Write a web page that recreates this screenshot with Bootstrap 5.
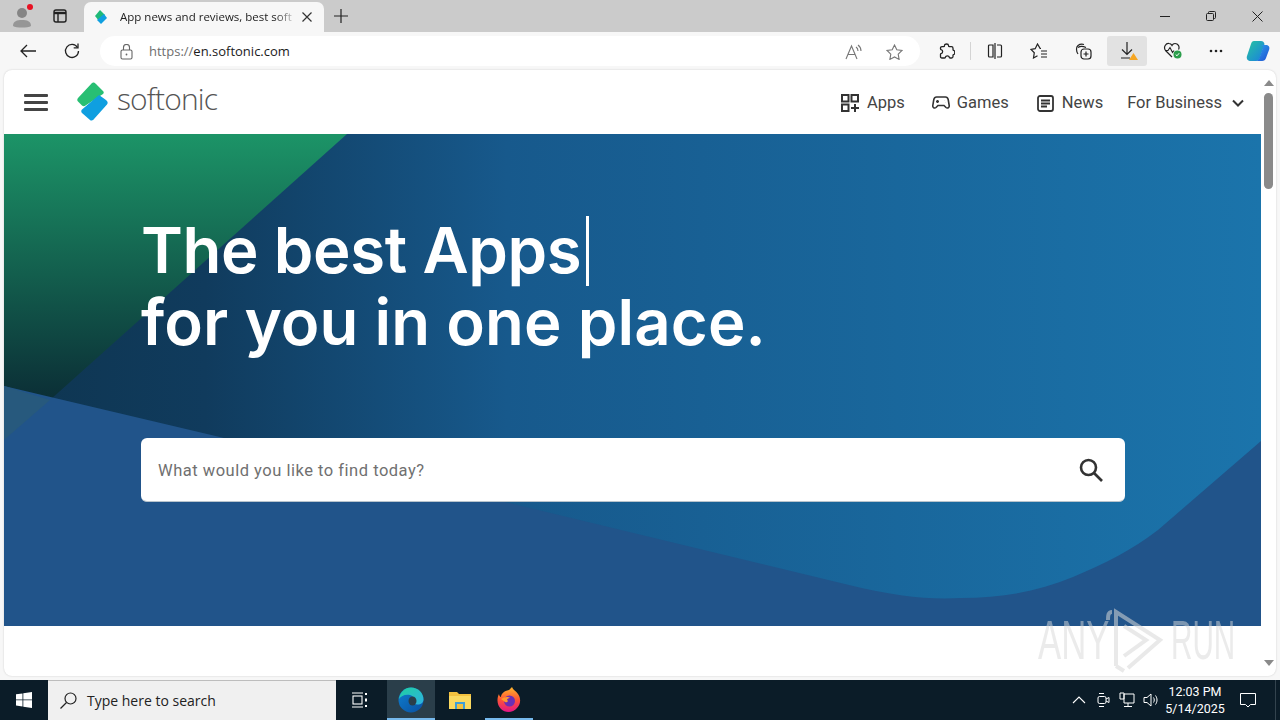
<!DOCTYPE html>
<html lang="en">
<head>
    <meta charset="UTF-8">
    <meta name="viewport" content="width=device-width, initial-scale=1.0">
    <title>Softonic</title>
    <link href="https://cdn.jsdelivr.net/npm/bootstrap@5.3.0/dist/css/bootstrap.min.css" rel="stylesheet">
    <style>
        body { width: 1280px; height: 720px; overflow: hidden; background: #f7f7f7; font-family: "Open Sans", "Liberation Sans", sans-serif; }
        svg { display: block; }

        /* browser chrome */
        .tab-strip { height: 32px; background: #cbcbcb; }
        .strip-btn { width: 38px; height: 32px; }
        .profile-btn { width: 36px; margin-left: 4px; }
        .tabs-btn { margin-left: 1px; }
        .browser-tab { width: 240px; height: 30px; margin-top: 2px; margin-left: 5px; padding: 0 11px 0 10px; background: #f7f7f7; border-radius: 7px 7px 0 0; font-size: 11.5px; color: #222; }
        .tab-title { width: 172px; margin-left: 12px; white-space: nowrap; overflow: hidden; -webkit-mask-image: linear-gradient(90deg, #000 90%, rgba(0,0,0,.25)); mask-image: linear-gradient(90deg, #000 90%, rgba(0,0,0,.25)); }
        .new-tab { margin-left: -2px; }
        .win-btn { width: 46px; height: 32px; }
        .tool-bar { height: 38px; padding-left: 6px; background: #f7f7f7; }
        .tool-btn { width: 44px; height: 30px; }
        .tool-active { width: 40px; margin: 0 2px; background: #e2e2e2; border-radius: 3px; }
        .address-box { width: 820px; height: 30px; margin-left: 6px; margin-right: 5px; padding-left: 20px; padding-top: 1px; background: #fff; border-radius: 15px; font-size: 13px; color: #1b1b1b; }
        .url-scheme { color: #6e6e6e; }
        .tool-sep { width: 1px; height: 18px; margin: 0 2px 0 1px; background: #d4d4d4; }

        /* page */
        .view-port { height: 606px; margin-left: 4px; margin-right: 4px; background: #fff; border-radius: 8px; box-shadow: 0 0 2px rgba(0,0,0,.18); overflow: hidden; }
        .page-area { width: 1257px; }
        .site-head { height: 64px; padding-left: 20px; padding-right: 17px; font-family: Roboto, sans-serif; font-size: 16.5px; color: #444; }
        .burger { width: 24px; margin-right: 27px; }
        .burger span { display: block; height: 3px; margin-bottom: 4px; background: #444; border-radius: 1px; }
        .burger span:last-child { margin-bottom: 0; }
        .brand-word { margin-left: 8px; margin-top: -6px; font-family: "Open Sans", sans-serif; font-size: 30px; font-weight: 300; letter-spacing: -.85px; color: #555; line-height: 40px; }
        .site-nav { padding-top: 2px; }
        .site-link { color: inherit; text-decoration: none; }
        .hero-band { height: 492px; padding: 80px 0 0 137px; background: #1a6ea5; overflow: hidden; }
        .hero-art { position: absolute; left: 0; top: 0; }
        .hero-title { position: relative; margin: 0; font-family: Inter, sans-serif; font-size: 63.5px; font-weight: 600; line-height: 72px; color: #fff; white-space: nowrap; }
        .title-first { letter-spacing: -.38px; }
        .title-second { letter-spacing: .1px; }
        .type-caret { display: inline-block; width: 3px; height: 70px; margin-left: 5px; background: #fff; vertical-align: -13px; }
        .search-box { position: relative; width: 984px; height: 64px; margin-top: 80px; padding: 3px 21px 0 17px; background: #fff; border-radius: 6px; border-bottom: 1px solid #b9c4cc; font-family: Roboto, sans-serif; font-size: 16.5px; letter-spacing: .51px; color: #707070; }
        .search-icon { margin-top: -3px; }
        .scroll-rail { width: 15px; }
        .scroll-thumb { width: 9px; height: 96px; margin-top: 7px; background: #8a8a8a; border-radius: 5px; }
        .rail-up { margin-top: 10px; }
        .rail-down { margin-bottom: 10px; }
        .watermark { position: absolute; left: 1036px; top: 608px; width: 200px; height: 66px; color: rgba(215,215,215,.5); pointer-events: none; }
        .mark-word { position: absolute; top: 4px; font-family: "Liberation Sans", sans-serif; font-size: 56px; line-height: 56px; transform-origin: 0 0; }
        .mark-any { left: 2px; transform: scaleX(.62); }
        .mark-run { left: 135px; transform: scaleX(.53); }
        .mark-play { left: 64px; top: 0; }

        /* taskbar */
        .task-bar { height: 40px; margin-top: 4px; background: #0b1c28; color: #fff; }
        .start-btn { width: 48px; height: 40px; }
        .task-search { width: 288px; height: 40px; padding-left: 12px; background: #f0f0f0; border-top: 1px solid #bdbdbd; font-size: 14px; color: #222; }
        .task-search span { margin-left: 10px; }
        .task-item { width: 48px; height: 40px; }
        .task-on { box-shadow: inset 0 -2px 0 #76b9ed; }
        .task-current { margin-left: 3px; background: #2a3e4a; }
        .task-next { margin-left: 1px; }
        .tray-area { font-family: Roboto, sans-serif; font-size: 12.5px; }
        .tray-icon { margin-left: 8px; }
        .tray-clock { width: 72px; line-height: 17px; text-align: center; }
        .tray-note { width: 34px; }
        .desk-line { width: 1px; height: 40px; margin: 0 4px 0 10px; background: #33434e; }
    </style>
</head>
<body>
    <!-- tab strip -->
    <div class="tab-strip d-flex align-items-start">
        <div class="strip-btn profile-btn position-relative d-flex align-items-center justify-content-center">
            <svg width="22" height="24" viewBox="0 0 22 24"><circle cx="11" cy="9" r="5" fill="#858585"/><path d="M2 22c0-5 4-6 9-6s9 1 9 6c-3 2-15 2-18 0z" fill="#969696"/></svg>
            <span class="position-absolute rounded-circle" style="left:23px;top:4px;width:6px;height:6px;background:#e81123"></span>
        </div>
        <div class="strip-btn tabs-btn d-flex align-items-center justify-content-center">
            <svg width="16" height="16" viewBox="0 0 16 16" fill="none" stroke="#222" stroke-width="1.4"><rect x="2" y="2" width="12" height="12" rx="2"/><path d="M2 5h12" stroke-width="2.400"/><path d="M6 5v9"/></svg>
        </div>
        <div class="browser-tab d-flex align-items-center">
            <svg width="14" height="16" viewBox="0 0 14 16"><path d="M1 7l5-6 5 5-6 6z" fill="#1fb978"/><path d="M3 11l7-6 3 4-6 6z" fill="#0f9fe0"/></svg>
            <span class="tab-title">App news and reviews, best soft</span>
            <svg class="ms-auto" width="12" height="12" viewBox="0 0 12 12" stroke="#333" stroke-width="1.2"><path d="M1.500 1.500l9 9M10.500 1.500l-9 9"/></svg>
        </div>
        <div class="strip-btn new-tab d-flex align-items-center justify-content-center">
            <svg width="14" height="14" viewBox="0 0 14 14" stroke="#222" stroke-width="1.2"><path d="M7 0v14M0 7h14"/></svg>
        </div>
        <div class="win-btn ms-auto d-flex align-items-center justify-content-center">
            <svg width="10" height="10" viewBox="0 0 10 10" stroke="#222"><path d="M0 5.500h10"/></svg>
        </div>
        <div class="win-btn d-flex align-items-center justify-content-center">
            <svg width="10" height="10" viewBox="0 0 10 10" fill="none" stroke="#222"><rect x=".5" y="2.500" width="7" height="7" rx="1"/><path d="M2.500 2V1.500a1 1 0 0 1 1-1h5a1 1 0 0 1 1 1v5a1 1 0 0 1-1 1H8"/></svg>
        </div>
        <div class="win-btn d-flex align-items-center justify-content-center">
            <svg width="11" height="11" viewBox="0 0 11 11" stroke="#222"><path d="M.5.5l10 10M10.500.5l-10 10"/></svg>
        </div>
    </div>

    <!-- toolbar -->
    <div class="tool-bar d-flex align-items-center">
        <div class="tool-btn d-flex align-items-center justify-content-center">
            <svg width="16" height="14" viewBox="0 0 16 14" fill="none" stroke="#222" stroke-width="1.3"><path d="M16 7H1M7 1L1 7l6 6"/></svg>
        </div>
        <div class="tool-btn d-flex align-items-center justify-content-center">
            <svg width="16" height="16" viewBox="0 0 16 16" fill="none" stroke="#222" stroke-width="1.3"><path d="M13.500 4.500A6.500 6.500 0 1 0 14.500 8"/><path d="M14 .5v4.300H9.700"/></svg>
        </div>
        <div class="address-box d-flex align-items-center">
            <svg width="13" height="16" viewBox="0 0 13 16" fill="none" stroke="#666" stroke-width="1.100"><rect x="1" y="6" width="11" height="9" rx="1.500"/><path d="M3.500 6V3.500a3 3 0 0 1 6 0V6"/><circle cx="6.500" cy="10.500" r=".9" fill="#666" stroke="none"/></svg>
            <span style="margin-left:16px"><span class="url-scheme">https://</span>en.softonic.com</span>
            <svg class="ms-auto" width="18" height="16" viewBox="0 0 18 16" fill="none" stroke="#777" stroke-width="1.100" style="margin-right:23px"><path d="M1 15L6.500 2 12 15M3 10.500h7"/><path d="M11 3c1.500 1 2 2.500 2 4M13 1c2 1.500 3 3.500 3 6"/></svg>
            <svg width="17" height="16" viewBox="0 0 17 16" fill="none" stroke="#777" stroke-width="1.100" style="margin-right:17px"><path d="M8.500 1l2.300 4.700 5.200.8-3.800 3.700.9 5.200-4.600-2.500-4.600 2.500.9-5.200L1 6.500l5.200-.8z"/></svg>
        </div>
        <div class="tool-btn d-flex align-items-center justify-content-center">
            <svg width="16" height="16" viewBox="0 0 16 16" fill="none" stroke="#222" stroke-width="1.300"><path d="M5.500 2.500C5.500.5 9.500.5 9.500 2.500c0 1 .3 1.200 1 1.200h2c1 0 1.500.5 1.500 1.500v1.300c0 .7.300 1 1 1 1 .3 1 3.500 0 3.800-.7 0-1 .3-1 1v1.200c0 1-.5 1.500-1.500 1.500h-1.300c-.7 0-1-.3-1-1-.3-1.500-3.400-1.500-3.700 0 0 .7-.3 1-1 1H3c-1 0-1.500-.5-1.500-1.500V11.300c0-.7.300-1 1-1 1.500-.3 1.500-3.200 0-3.500-.7 0-1-.3-1-1V5.200c0-1 .5-1.500 1.500-1.500h1.500c.7 0 1-.4 1-1.200z"/></svg>
        </div>
        <span class="tool-sep"></span>
        <div class="tool-btn d-flex align-items-center justify-content-center">
            <svg width="16" height="16" viewBox="0 0 16 16" fill="none" stroke="#222" stroke-width="1.200"><path d="M6 2H2.500a1 1 0 0 0-1 1v10a1 1 0 0 0 1 1H6zM8 0v16M10 2h3.500a1 1 0 0 1 1 1v10a1 1 0 0 1-1 1H10"/></svg>
        </div>
        <div class="tool-btn d-flex align-items-center justify-content-center">
            <svg width="18" height="16" viewBox="0 0 18 16" fill="none" stroke="#222" stroke-width="1.200"><path d="M11 5.500l-.9-.1L7.500 1 5.200 5.700 1 6.500l3.300 3.200L3.500 15l4-2.200"/><path d="M11 8h6M11 11h6M11 14h6"/></svg>
        </div>
        <div class="tool-btn d-flex align-items-center justify-content-center">
            <svg width="17" height="17" viewBox="0 0 17 17" fill="none" stroke="#222" stroke-width="1.200"><path d="M3 11C1 8 1 4 3 2.500 5 1 7 1 9 1.500M3 4.500c2-1.500 5-1.500 8 0"/><rect x="6" y="6" width="10" height="10" rx="3"/><path d="M11 8.500v5M8.500 11h5"/></svg>
        </div>
        <div class="tool-btn tool-active d-flex align-items-center justify-content-center">
            <svg width="20" height="20" viewBox="0 0 20 20" style="margin-left:3px"><path d="M8 1v12M3 8.500L8 13.500l5-5M2 17h9" fill="none" stroke="#222" stroke-width="1.200"/><path d="M14.500 12l4.500 7h-9z" fill="#f5a623"/></svg>
        </div>
        <div class="tool-btn d-flex align-items-center justify-content-center">
            <svg width="20" height="18" viewBox="0 0 20 18" style="margin-left:3px"><path d="M9 15L2.500 8.500C0 5 3 1 6 1.500c1.500 0 2.500 1 3 2 .5-1 1.500-2 3-2 3 0 5 3 3.500 6" fill="none" stroke="#222" stroke-width="1.200"/><path d="M2 8.500h3l2-3 2.500 5 1.500-2" fill="none" stroke="#222" stroke-width="1.100"/><circle cx="14.500" cy="12.500" r="4" fill="#2a9d4a"/><path d="M12.700 12.500l1.300 1.300 2.200-2.600" fill="none" stroke="#fff"/></svg>
        </div>
        <div class="tool-btn d-flex align-items-center justify-content-center">
            <svg width="14" height="4" viewBox="0 0 14 4" fill="#222" style="margin-left:2px"><circle cx="2" cy="2" r="1.300"/><circle cx="7" cy="2" r="1.300"/><circle cx="12" cy="2" r="1.300"/></svg>
        </div>
        <div class="d-flex align-items-center justify-content-center" style="width:40px;height:30px">
            <svg width="24" height="24" viewBox="0 0 24 24" style="margin-left:2px">
                <defs>
                    <linearGradient id="copA" x1="0" y1="0" x2="1" y2="1"><stop offset="0" stop-color="#27c4a0"/><stop offset="1" stop-color="#1a7fe0"/></linearGradient>
                    <linearGradient id="copB" x1="0" y1="0" x2="1" y2="1"><stop offset="0" stop-color="#2ea8f0"/><stop offset="1" stop-color="#1f4fd0"/></linearGradient>
                </defs>
                <path d="M8 2h7c2 0 3 1 3.500 3L14 19c-.5 2-2 3-4 3H5c-3 0-5-2-4-5L5 5c.5-2 1.500-3 3-3z" fill="url(#copA)"/>
                <path d="M14 6h6c3 0 4 2.500 3 5l-3 8c-.5 2-2 3-4 3H9c2 0 4-1 4.500-3L17 8c.3-1-.5-2-3-2z" fill="url(#copB)"/>
            </svg>
        </div>
    </div>

    <!-- page viewport -->
    <div class="view-port d-flex">
        <div class="page-area">
            <header class="site-head d-flex align-items-center">
                <div class="burger"><span></span><span></span><span></span></div>
                <svg width="34" height="40" viewBox="0 0 34 40">
                    <path d="M17 1L3 16c-1 1.500-1 2.500 0 3.500l4 4c1 1 2.500 1 3.500 0L28 12c1-1 1-2 0-3l-7-7C20 .5 18 0 17 1z" fill="#28bf73"/>
                    <path d="M24 13l7 5c2 1.500 2 3 1 4.500L19 37c-1 1.500-3 2-4 1l-8-7c-1-1-1-2.500 0-3.500z" fill="#0f9fe0"/>
                </svg>
                <span class="brand-word">softonic</span>
                <nav class="site-nav ms-auto d-flex align-items-center">
                    <a class="site-link d-flex align-items-center">
                        <svg style="margin-right:8px" width="18" height="18" viewBox="0 0 18 18" fill="none" stroke="#333" stroke-width="2"><rect x="1" y="1" width="6.500" height="6.500"/><rect x="10.500" y="1" width="6.500" height="6.500"/><rect x="1" y="10.500" width="6.500" height="6.500"/><path d="M14 10v8M10 14h8"/></svg>
                        Apps
                    </a>
                    <a class="site-link d-flex align-items-center" style="margin-left:27px">
                        <svg style="margin-right:7px" width="18" height="14" viewBox="0 0 18 14" fill="none" stroke="#333" stroke-width="1.600"><path d="M4.500 1h9c1.500 0 2.300 1 2.700 2.500l1 6c.3 2-1.700 3.300-3.200 2L12 9.500H6l-2 2c-1.500 1.300-3.500 0-3.200-2l1-6C2.200 2 3 1 4.500 1z"/><path d="M4 5.500h3M5.500 4v3M12 4.500h.1M13.500 6.500h.1"/></svg>
                        Games
                    </a>
                    <a class="site-link d-flex align-items-center" style="margin-left:28px">
                        <svg style="margin-right:8px" width="17" height="17" viewBox="0 0 17 17" fill="none" stroke="#333" stroke-width="1.800"><rect x="1" y="1" width="15" height="15" rx="2"/><path d="M4 5.500h9M4 8.500h9M4 11.500h6"/></svg>
                        News
                    </a>
                    <a class="site-link d-flex align-items-center" style="margin-left:24px">
                        For Business
                        <svg style="margin-left:10px" width="12" height="8" viewBox="0 0 12 8" fill="none" stroke="#333" stroke-width="2"><path d="M1 1.500l5 5 5-5"/></svg>
                    </a>
                </nav>
            </header>
            <section class="hero-band position-relative">
                <svg class="hero-art" width="1257" height="492" viewBox="0 0 1257 492">
                    <defs>
                        <linearGradient id="baseFill" x1="0" y1="0" x2="1" y2="0"><stop offset="0" stop-color="#0e3550"/><stop offset=".16" stop-color="#103b5d"/><stop offset=".4" stop-color="#17598c"/><stop offset="1" stop-color="#1b74ab"/></linearGradient>
                        <linearGradient id="greenFill" x1="0" y1="0" x2="0" y2="1"><stop offset="0" stop-color="#1c9467"/><stop offset="1" stop-color="#0b2e36"/></linearGradient>
                    </defs>
                    <rect width="1257" height="492" fill="url(#baseFill)"/>
                    <path d="M0 0H343L46 266 0 252z" fill="url(#greenFill)"/>
                    <path d="M0 252L220 304 497 367 845 451C890 462 925 466 957 464 1000 464 1035 457 1069 443 1100 430 1128 416 1154 396L1257 307V492H0z" fill="#21548a"/>
                    <path d="M0 252L46 266 0 306z" fill="#27597d"/>
                </svg>
                <h1 class="hero-title"><span class="title-first">The best Apps</span><span class="type-caret"></span><br><span class="title-second">for you in one place.</span></h1>
                <div class="search-box d-flex align-items-center">
                    <span>What would you like to find today?</span>
                    <svg class="search-icon ms-auto" width="26" height="26" viewBox="0 0 26 26" fill="none" stroke="#333" stroke-width="2.600"><circle cx="10.500" cy="10.500" r="7.500"/><path d="M16 16l8 8"/></svg>
                </div>
            </section>
        </div>
        <div class="scroll-rail d-flex flex-column align-items-center">
            <svg class="rail-up" width="10" height="6" viewBox="0 0 10 6"><path d="M5 0l5 6H0z" fill="#8a8a8a"/></svg>
            <div class="scroll-thumb"></div>
            <svg class="rail-down mt-auto" width="10" height="6" viewBox="0 0 10 6"><path d="M5 6L0 0h10z" fill="#8a8a8a"/></svg>
        </div>
    </div>

    <!-- taskbar -->
    <div class="task-bar d-flex align-items-center">
        <div class="start-btn d-flex align-items-center justify-content-center">
            <svg width="16" height="16" viewBox="0 0 16 16" fill="#fff"><path d="M0 2.300L6.500 1.400V7.500H0zM7.300 1.300L16 0V7.500H7.300zM0 8.300H6.500V14.500L0 13.600zM7.300 8.300H16V16L7.300 14.700z"/></svg>
        </div>
        <div class="task-search d-flex align-items-center">
            <svg width="17" height="17" viewBox="0 0 17 17" fill="none" stroke="#222" stroke-width="1.200"><circle cx="10.500" cy="6.500" r="5.500"/><path d="M6.500 10.500L.5 16.500"/></svg>
            <span>Type here to search</span>
        </div>
        <div class="task-item d-flex align-items-center justify-content-center">
            <svg width="16" height="16" viewBox="0 0 16 16" fill="none" stroke="#fff" stroke-width="1.100"><path d="M0 1h11M0 15h11"/><rect x="1" y="4" width="9" height="8"/><path d="M14 1v2M14 6.500v3M14 13v2" stroke-width="2"/></svg>
        </div>
        <div class="task-item task-current task-on d-flex align-items-center justify-content-center">
            <svg width="26" height="26" viewBox="0 0 26 26">
                <defs>
                    <linearGradient id="edgeA" x1="0" y1="0" x2="1" y2="1"><stop offset="0" stop-color="#1fd0a0"/><stop offset="1" stop-color="#2fb0e0"/></linearGradient>
                    <linearGradient id="edgeB" x1="0" y1="0" x2="1" y2="1"><stop offset="0" stop-color="#0e7fd0"/><stop offset="1" stop-color="#0a4fa0"/></linearGradient>
                </defs>
                <circle cx="13" cy="13" r="12.500" fill="url(#edgeB)"/>
                <path d="M1 12C2 5 7 .5 13 .5c7 0 12.500 5.500 12.500 12 0 3-2.500 5-6 5-2.500 0-4.500-1-4.500-2 2-2 1-6.500-3-7.500C7 7 3 9 1 12z" fill="url(#edgeA)"/>
                <ellipse cx="14.500" cy="14" rx="4" ry="4.500" fill="#2a3e4a"/>
            </svg>
        </div>
        <div class="task-item task-next d-flex align-items-center justify-content-center">
            <svg width="24" height="22" viewBox="0 0 24 22"><path d="M1 3h8l2 2h12v15H1z" fill="#f3c13f"/><path d="M1 7h22v13H1z" fill="#fbd960"/><path d="M7 20v-7h10v7" fill="#3f9fd8"/><path d="M9 15h6v5H9z" fill="#f3c13f"/></svg>
        </div>
        <div class="task-item task-next task-on d-flex align-items-center justify-content-center">
            <svg width="24" height="26" viewBox="0 0 24 26">
                <defs><linearGradient id="foxA" x1="0" y1="0" x2="0" y2="1"><stop offset="0" stop-color="#ffb92d"/><stop offset=".5" stop-color="#ff5634"/><stop offset="1" stop-color="#e31587"/></linearGradient></defs>
                <path d="M12 3c2-2 3-3 3-3 1 3 4 4 6 7 3 4 3 10-1 14-4 5-12 5-16 1C0 18-.5 12 2 7c0 1 1 3 2 3 0-3 3-6 8-7z" fill="url(#foxA)"/>
                <circle cx="12.500" cy="14" r="5.500" fill="#6b2fb5"/>
                <path d="M4 12c3-2 7-3 9-1-2 0-3 1-3 2 2 1 0 3-2 2" fill="#ff9a2e"/>
            </svg>
        </div>
        <div class="tray-area ms-auto d-flex align-items-center">
            <svg width="14" height="8" viewBox="0 0 14 8" fill="none" stroke="#fff" stroke-width="1.100"><path d="M1 7l6-6 6 6"/></svg>
            <svg style="margin-left:9px" width="16" height="16" viewBox="0 0 16 16" fill="none" stroke="#fff"><rect x="3" y="4.500" width="8" height="7" rx="1.500"/><path d="M11 7l3-1.500v5L11 9M4 1.500h5M4 14.500h5"/></svg>
            <svg class="tray-icon" width="16" height="16" viewBox="0 0 16 16" fill="none" stroke="#fff"><path d="M5 2h10v9H5zM1 1h4v6H1zM9 11v3M5 14.500h8"/></svg>
            <svg class="tray-icon" width="16" height="16" viewBox="0 0 16 16" fill="none" stroke="#fff"><path d="M1 5.500h3L8 2v12L4 10.500H1zM10.500 5.500c1 1.500 1 3.500 0 5M12.500 3.500c2 3 2 6 0 9"/></svg>
            <div class="tray-clock"><div>12:03 PM</div><div>5/14/2025</div></div>
            <div class="tray-note d-flex align-items-center justify-content-center">
                <svg width="16" height="16" viewBox="0 0 16 16" fill="none" stroke="#fff"><path d="M.5 1.500h15v11h-5L8 15l-2.500-2.500h-5z"/></svg>
            </div>
            <span class="desk-line"></span>
        </div>
    </div>

    <!-- watermark sits over the page -->
    <div class="watermark">
        <span class="mark-word mark-any">ANY</span>
        <svg class="position-absolute mark-play" width="70" height="66" viewBox="0 0 70 66" fill="none" stroke="rgba(215,215,215,.55)" stroke-width="4"><path d="M8 12c0-4 0-8 4-8M16 58V4l44 28-32 28M16 58l8 5"/><path d="M24 18l22 14-22 16"/></svg>
        <span class="mark-word mark-run">RUN</span>
    </div>

    <script src="https://cdn.jsdelivr.net/npm/bootstrap@5.3.0/dist/js/bootstrap.bundle.min.js"></script>
</body>
</html>
